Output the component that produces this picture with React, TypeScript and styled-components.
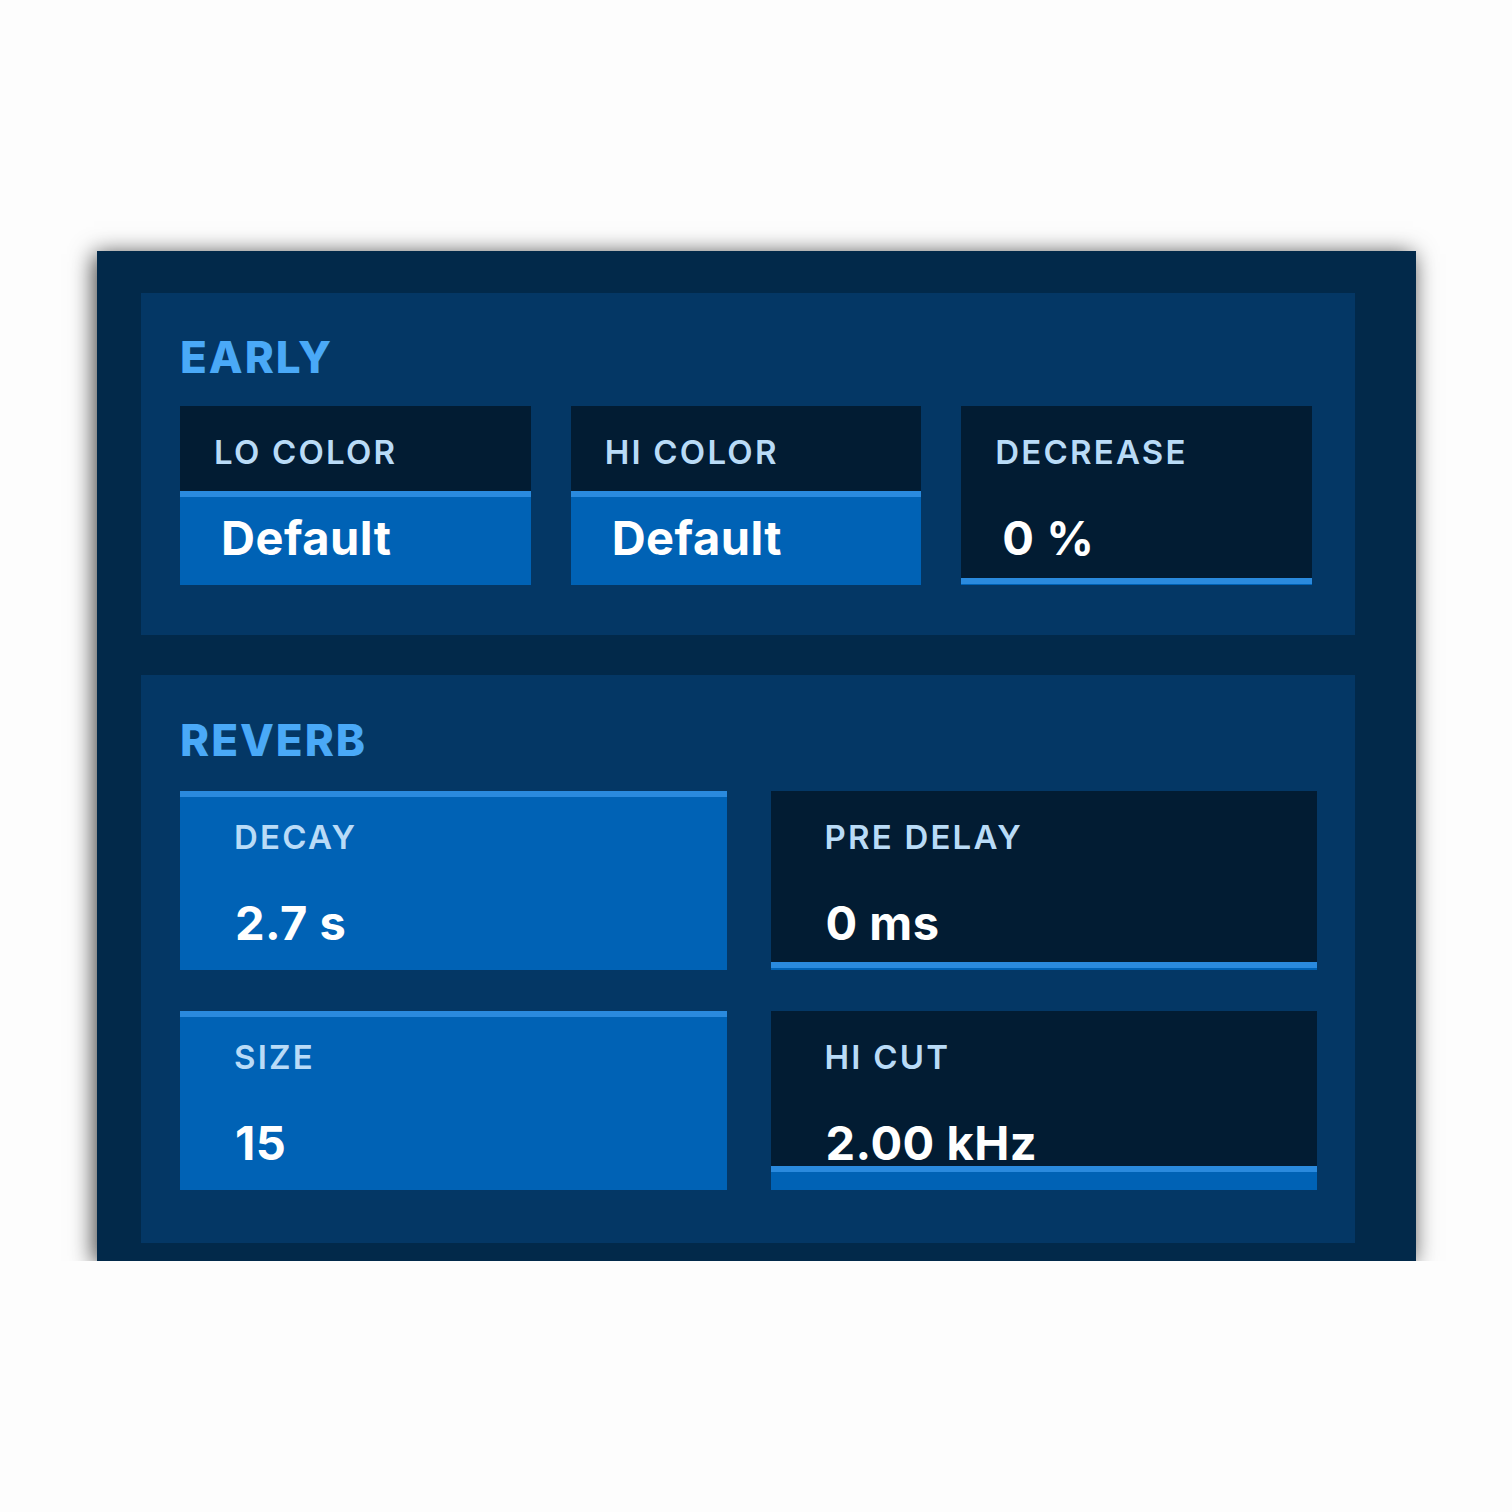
import React from "react";
import styled, {createGlobalStyle} from "styled-components";

const GlobalStyle = createGlobalStyle`
  html, body {
    margin: 0;
    padding: 0;
    background: #fdfdfd;
  }
  body {
    font-family: Inter, "Liberation Sans", sans-serif;
  }
`;

type TileData = {
    label: string;
    value: string;
    fill: number;
};

const early: TileData[] = [
    {label: "LO COLOR", value: "Default", fill: 88},
    {label: "HI COLOR", value: "Default", fill: 88},
    {label: "DECREASE", value: "0 %", fill: 1},
];

const reverb: TileData[] = [
    {label: "DECAY", value: "2.7 s", fill: 173},
    {label: "PRE DELAY", value: "0 ms", fill: 2},
    {label: "SIZE", value: "15", fill: 173},
    {label: "HI CUT", value: "2.00 kHz", fill: 18},
];

const Tile = ({data, pad, indent}: {data: TileData; pad: number; indent: number}) => {
    // fill grows up from the bottom, topped by a light stripe
    const bg = `linear-gradient(to top, #0062b5 0 ${data.fill}px, #2a8ade ${data.fill}px ${data.fill + 6}px, #021c33 ${data.fill + 6}px)`;
    return (
        <TileBox $pad={pad} style={{background: bg}}>
            <Label>{data.label}</Label>
            <Value $indent={indent}>{data.value}</Value>
        </TileBox>
    );
};

const App = () => {
    return (
        <Page>
            <GlobalStyle />
            <Panel>
                <Section $top={42} $bottom={50}>
                    <Title $gap={27}>EARLY</Title>
                    <Grid $cols={3} $gap={40} $trim={5}>
                        {early.map((t) => (
                            <Tile key={t.label} data={t} pad={34} indent={7} />
                        ))}
                    </Grid>
                </Section>
                <Section $top={43} $bottom={53}>
                    <Title $gap={29}>REVERB</Title>
                    <Grid $cols={2} $gap={44} $trim={0}>
                        {reverb.map((t) => (
                            <Tile key={t.label} data={t} pad={54} indent={1} />
                        ))}
                    </Grid>
                </Section>
            </Panel>
        </Page>
    );
};

export default App;

const Page = styled.div`
  padding: 251px 0 0 97px;
  height: 1261px;
  box-sizing: border-box;
`;

const Panel = styled.div`
  width: 1319px;
  box-sizing: border-box;
  background-color: #02294a;
  padding: 42px 61px 18px 44px;
  display: flex;
  flex-direction: column;
  gap: 40px;
  box-shadow: -3px 3px 22px rgba(0, 0, 0, 0.75);
`;

const Section = styled.div<{$top: number; $bottom: number}>`
  background-color: #043765;
  padding: ${(p) => p.$top}px 38px ${(p) => p.$bottom}px 39px;
`;

const Title = styled.div<{$gap: number}>`
  font-size: 44px;
  line-height: 44px;
  font-weight: 800;
  letter-spacing: 2px;
  color: #4aa9f7;
  margin: 0 0 ${(p) => p.$gap}px 0;
`;

const Grid = styled.div<{$cols: number; $gap: number; $trim: number}>`
  display: grid;
  grid-template-columns: repeat(${(p) => p.$cols}, 1fr);
  column-gap: ${(p) => p.$gap}px;
  row-gap: 41px;
  margin-right: ${(p) => p.$trim}px;
`;

const TileBox = styled.div<{$pad: number}>`
  height: 179px;
  display: flex;
  flex-direction: column;
  padding-left: ${(p) => p.$pad}px;
`;

const Label = styled.div`
  height: 92px;
  display: flex;
  align-items: center;
  font-size: 33px;
  font-weight: 600;
  letter-spacing: 2.2px;
  color: #b9dbf7;
`;

const Value = styled.div<{$indent: number}>`
  height: 78px;
  display: flex;
  align-items: center;
  padding-left: ${(p) => p.$indent}px;
  font-size: 47px;
  font-weight: 700;
  letter-spacing: 0.5px;
  color: #ffffff;
`;
